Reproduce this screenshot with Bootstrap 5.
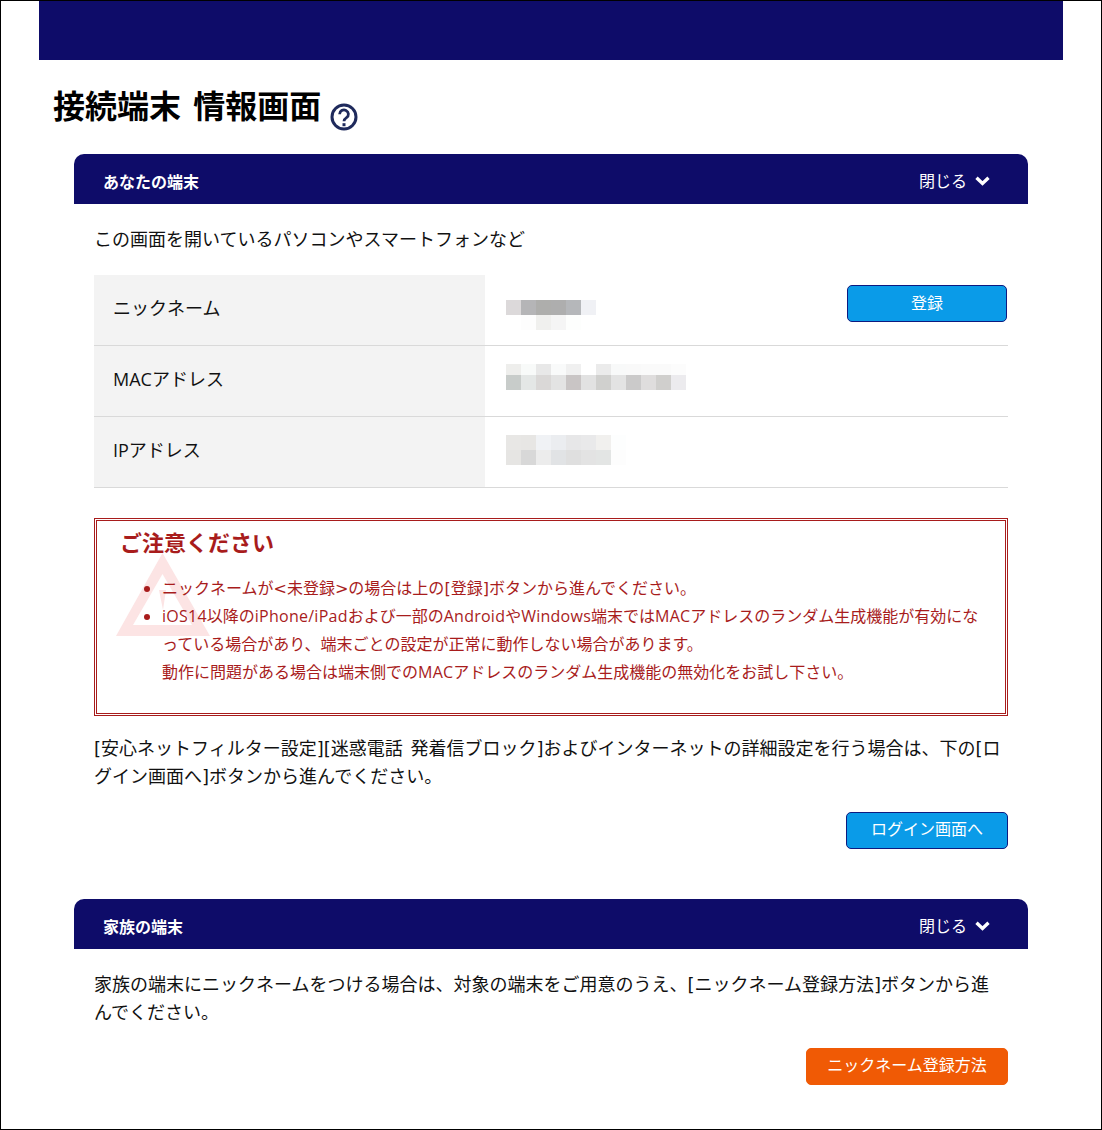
<!doctype html>
<html lang="ja">
    <head>
        <meta charset="UTF-8" />
        <meta name="viewport" content="width=device-width, initial-scale=1.0" />
        <title>接続端末 情報画面</title>
        <link href="https://cdn.jsdelivr.net/npm/bootstrap@5.3.0/dist/css/bootstrap.min.css" rel="stylesheet" />
        <style>
            html, body { height: 100%; overflow: hidden; }
            body { font-family: "Open Sans", "Noto Sans CJK JP", sans-serif; font-size: 18px; line-height: 28px; color: #111; background: #fff; }
            .page-frame { height: 1130px; border: 1px solid #000; padding: 0 38px; }
            .top-band { height: 59px; background: #0e0c69; }
            .page-title { padding: 25px 0 0 14px; height: 94px; }
            .page-title h1 { font-size: 32px; line-height: 42px; font-weight: 700; color: #000; margin: 0; word-spacing: 4px; }
            .help-icon { margin: 18px 0 0 9px; }
            .panel { margin: 0 35px; }
            .panel + .panel { margin-top: 50px; }
            .panel-head { height: 50px; background: #0e0c69; color: #fff; border-radius: 10px 10px 0 0; padding: 0 38px 0 29px; font-size: 16px; }
            .panel-head strong { padding-top: 5px; }
            .panel-toggle { gap: 8px; padding-top: 4px; }
            .panel-body { padding: 21px 20px 0; }
            .panel-body p { margin: 0; word-spacing: 3px; }
            .info-rows { margin-top: 22px; }
            .info-row { height: 71px; border-bottom: 1px solid #d9d9d9; }
            .info-label { width: 391px; background: #f3f3f3; padding: 0 0 5px 19px; }
            .info-value { padding-left: 21px; }
            .value-a { padding-top: 25px; }
            .value-b { padding-top: 18px; }
            .blur-grid { display: grid; grid-auto-columns: 15px; grid-auto-flow: column; grid-template-rows: repeat(2, 15px); }
            .blur-grid.thin-top { grid-template-rows: 11px 15px; }
            .act-btn { color: #fff; font-size: 16px; line-height: 23px; border-radius: 5px; padding: 5px 0 7px; border: 1px solid #0d1a80; background: #0a9be8; }
            .act-btn:hover { color: #fff; background: #0a9be8; }
            .act-orange, .act-orange:hover { background: #f05a05; border-color: #f05a05; }
            .btn-register { width: 160px; margin: -15px 1px 0 auto; padding: 6px 0; }
            .btn-login { width: 162px; }
            .btn-nick { width: 202px; }
            .btn-row { margin-top: 22px; }
            .notice-box { position: relative; margin: 30px 0 18px; height: 198px; border: 3px double #a81c1c; color: #a81c1c; font-size: 16px; padding: 5px 23px 0; }
            .notice-box h2 { font-size: 22px; line-height: 32px; font-weight: 700; margin: 0 0 16px; position: relative; }
            .notice-box ul { margin: 0; padding-left: 42px; position: relative; }
            .notice-mark { position: absolute; left: 19px; top: 32px; }
            /* Brackets and latin runs are wider in the reference font */
            .sym { font-family: "DejaVu Sans", sans-serif; line-height: 1; }
            .lat { letter-spacing: .25px; }
        </style>
    </head>
    <body>
        <div class="page-frame">
            <div class="top-band"></div>

            <div class="page-title d-flex align-items-start">
                <h1>接続端末 情報画面</h1>
                <svg class="help-icon" width="28" height="28" viewBox="0 0 28 28" fill="none" stroke="#1f2a5c" stroke-width="3">
                    <circle cx="14" cy="14" r="12" />
                    <path d="M9.6 11.2a4.4 4.2 0 1 1 6.9 3.4c-1.6 1.100-2.500 1.800-2.500 3.600" stroke-width="2.800" />
                    <path d="M14 20.200v3" />
                </svg>
            </div>

            <!-- Your device -->
            <section class="panel">
                <div class="panel-head d-flex align-items-center justify-content-between">
                    <strong>あなたの端末</strong>
                    <span class="panel-toggle d-flex align-items-center">閉じる
                        <svg width="15" height="10" viewBox="0 0 15 10" fill="none" stroke="#fff" stroke-width="3.4"><path d="M1.5 1.8l6 5.6 6-5.6" /></svg>
                    </span>
                </div>
                <div class="panel-body">
                    <p>この画面を開いているパソコンやスマートフォンなど</p>
                    <div class="info-rows">
                        <div class="info-row d-flex">
                            <div class="info-label d-flex align-items-center">ニックネーム</div>
                            <div class="info-value value-a flex-grow-1 d-flex align-items-start">
                                <div class="blur-grid" data-cells="#dcd9da,#fff,#b5b5b7,#fdfdfd,#aeaeac,#f0f0ee,#aeaeae,#f5f5f5,#b5b7ba,#fdfefd,#f0f1f5,#fff"></div>
                                <a href="#" class="btn act-btn btn-register">登録</a>
                            </div>
                        </div>
                        <div class="info-row d-flex">
                            <div class="info-label d-flex align-items-center">MACアドレス</div>
                            <div class="info-value value-b flex-grow-1">
                                <div class="blur-grid thin-top" data-cells="#eeeeec,#c8ccca,#f8faf9,#e4e7e6,#e8e8e8,#dad8d7,#f9fafa,#e3e3e3,#f0f0f0,#c9c5c5,#fff,#e2e2e2,#ebebeb,#d0d0ce,#f8f9f9,#e3e3e3,#f9f9f9,#cbcaca,#fafafa,#dfdddd,#fafafa,#d0cfcd,#fcfcfc,#ecebee"></div>
                            </div>
                        </div>
                        <div class="info-row d-flex">
                            <div class="info-label d-flex align-items-center">IPアドレス</div>
                            <div class="info-value value-b flex-grow-1">
                                <div class="blur-grid" data-cells="#e8e7e5,#e6e5e3,#e7e6e4,#d8d8d8,#f0f2f5,#ececec,#ebedf0,#e1e3e5,#e7e7e8,#dfdfdf,#e9e9ea,#e3e3e3,#f1f0ee,#e3e5e4,#fdfefe,#fdfdfd"></div>
                            </div>
                        </div>
                    </div>

                    <div class="notice-box">
                        <svg class="notice-mark" width="94" height="83" viewBox="0 0 94 83" fill="#fce4e4">
                            <path fill-rule="evenodd" d="M46.500 0L94 83H0zM46.500 21L76 72H17zM43 37h7l-3 20z" />
                        </svg>
                        <h2>ご注意ください</h2>
                        <ul>
                            <li>ニックネームが<span class="sym">&lt;</span>未登録<span class="sym">&gt;</span>の場合は上の<span class="sym">[</span>登録<span class="sym">]</span>ボタンから進んでください。</li>
                            <li><span class="lat">iOS14</span>以降の<span class="lat">iPhone/iPad</span>および一部の<span class="lat">Android</span>や<span class="lat">Windows</span>端末では<span class="lat">MAC</span>アドレスのランダム生成機能が有効にな<br />っている場合があり、端末ごとの設定が正常に動作しない場合があります。<br />動作に問題がある場合は端末側での<span class="lat">MAC</span>アドレスのランダム生成機能の無効化をお試し下さい。</li>
                        </ul>
                    </div>

                    <p><span class="sym">[</span>安心ネットフィルター設定<span class="sym">][</span>迷惑電話 発着信ブロック<span class="sym">]</span>およびインターネットの詳細設定を行う場合は、下の<span class="sym">[</span>ロ<br />グイン画面へ<span class="sym">]</span>ボタンから進んでください。</p>
                    <div class="btn-row d-flex justify-content-end">
                        <a href="#" class="btn act-btn btn-login">ログイン画面へ</a>
                    </div>
                </div>
            </section>

            <!-- Family devices -->
            <section class="panel">
                <div class="panel-head d-flex align-items-center justify-content-between">
                    <strong>家族の端末</strong>
                    <span class="panel-toggle d-flex align-items-center">閉じる
                        <svg width="15" height="10" viewBox="0 0 15 10" fill="none" stroke="#fff" stroke-width="3.4"><path d="M1.5 1.8l6 5.6 6-5.6" /></svg>
                    </span>
                </div>
                <div class="panel-body">
                    <p>家族の端末にニックネームをつける場合は、対象の端末をご用意のうえ、<span class="sym">[</span>ニックネーム登録方法<span class="sym">]</span>ボタンから進<br />んでください。</p>
                    <div class="btn-row d-flex justify-content-end">
                        <a href="#" class="btn act-btn act-orange btn-nick">ニックネーム登録方法</a>
                    </div>
                </div>
            </section>
        </div>

        <script src="https://cdn.jsdelivr.net/npm/bootstrap@5.3.0/dist/js/bootstrap.bundle.min.js"></script>
        <script>
            // Pixelated blur blocks over the masked values
            document.querySelectorAll(".blur-grid").forEach(function (grid) {
                grid.dataset.cells.split(",").forEach(function (colour) {
                    const cell = document.createElement("span");
                    cell.style.background = colour;
                    grid.appendChild(cell);
                });
            });
        </script>
    </body>
</html>
